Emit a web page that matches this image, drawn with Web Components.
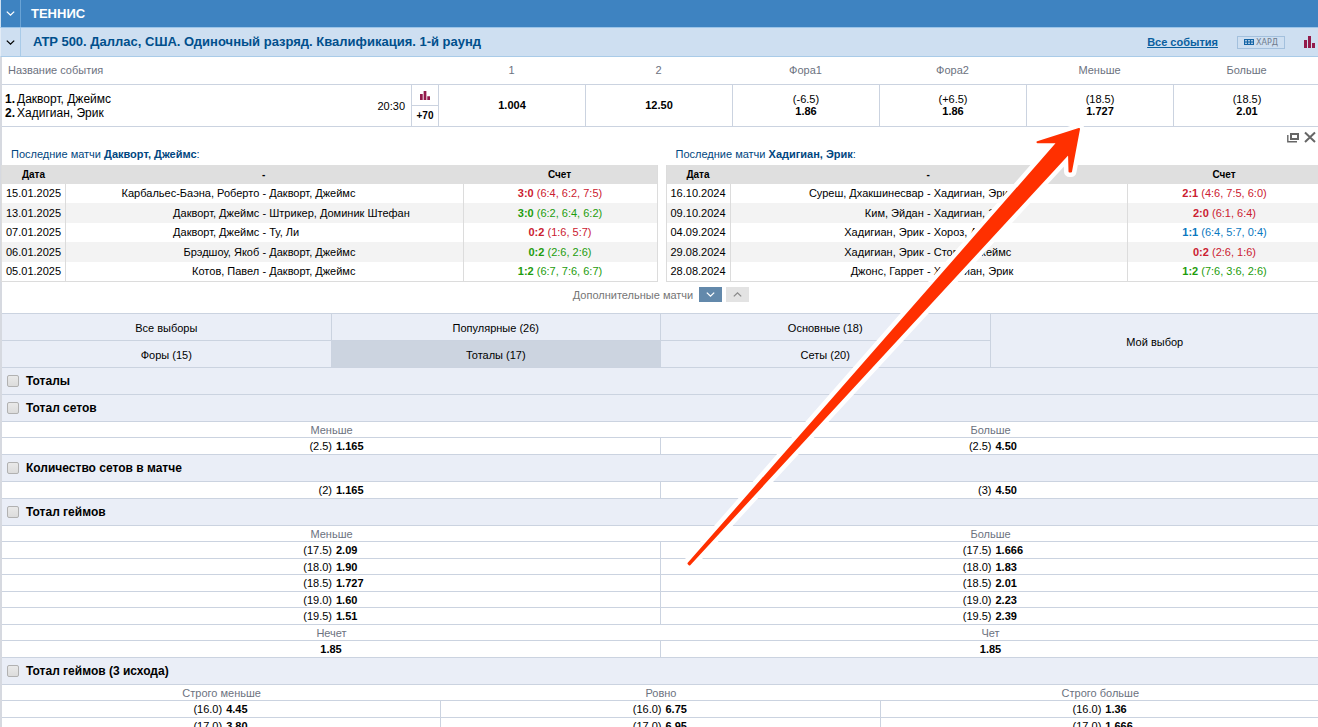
<!DOCTYPE html>
<html lang="ru">
<head>
<meta charset="utf-8">
<meta name="viewport" content="width=device-width, initial-scale=1">
<title>Теннис – линия</title>
<style>
  html { overflow: hidden auto; scrollbar-width: none; }
  body { margin: 0; background: #fff; color: #000; font: 11px/14px "Liberation Sans", Arial, sans-serif; }
</style>
</head>
<body>
<betting-page></betting-page>

<script>
const define = (name, html, setup) => {
  const template = document.createElement('template');
  template.innerHTML = `<style>*{box-sizing:border-box}:host{display:block}</style>${html}`;
  customElements.define(name, class extends HTMLElement {
    constructor() {
      super();
      this.attachShadow({ mode: 'open' }).append(template.content.cloneNode(true));
    }
    connectedCallback() {
      if (setup && !this.ready) { this.ready = true; setup(this, this.shadowRoot); }
    }
  });
};

/* Icons */
define('chevron-icon', `
<style>
  :host { width: 9px; height: 9px; line-height: 0; }
  :host([up]) svg { transform: rotate(180deg); }
</style>
<svg width="9" height="9" viewBox="0 0 9 9" fill="none" stroke="currentColor" stroke-width="1.3" aria-hidden="true"><path d="M.8 2.6 4.5 6.2 8.2 2.6"/></svg>`);

define('bars-icon', `
<style>:host { line-height: 0; color: #931b4b; } svg { width: var(--w, 11px); height: var(--h, 12px); }</style>
<svg viewBox="0 0 11 12" preserveAspectRatio="none" fill="currentColor" aria-hidden="true"><path d="M0 4h3v8H0zM4 0h3v12H4zM8 7h3v5H8z"/></svg>`);

/* Sport title */
define('sport-header', `
<style>
  header { display: grid; grid-template-columns: 20px 1fr; height: 28px; background: #3e83c1; color: #fff; border-bottom: 1px solid #9cc5e9; border-left: 1px solid #cfe0f1; }
  button { all: unset; display: grid; place-items: center; border-right: 1px solid #6aa3d5; }
  h1 { margin: 0; padding-left: 10px; font-size: 13px; line-height: 27px; font-weight: 700; }
</style>
<header><button aria-label="Свернуть"><chevron-icon></chevron-icon></button><h1><slot></slot></h1></header>`);

/* Tournament bar */
define('league-bar', `
<style>
  header { display: flex; height: 29px; background: #cedff1; color: #004f8c; border-bottom: 1px solid #a9cbe8; border-left: 1px solid #e3ecf6; }
  .fold { all: unset; display: grid; place-items: center; flex: 0 0 19px; color: #000; border-right: 1px solid #a9cbe8; }
  h2 { flex: 1; margin: 0; padding-left: 12px; font-size: 13px; line-height: 28px; }
  nav { display: flex; align-items: center; padding-right: 5px; }
  a { color: #0a5f9f; font-weight: 700; }
  .court { display: flex; align-items: center; gap: 2px; height: 13px; margin: 0 19px; padding: 0 6px; border: 1px solid #a3c0dd; color: #6f7b8c; font: 8px/11px "DejaVu Sans", sans-serif; }
  .court svg { flex: none; }
</style>
<header>
  <button class="fold" aria-label="Свернуть"><chevron-icon></chevron-icon></button>
  <h2><slot></slot></h2>
  <nav>
    <a href="#all">Все события</a>
    <span class="court"><svg width="10" height="6" viewBox="0 0 10 6" aria-hidden="true"><path fill="#1464a5" d="M0 0h10v6H0z"/><path fill="#cedff1" d="M1 1h2v1H1zM4 1h2v1H4zM7 1h2v1H7zM1 4h2v1H1zM4 4h2v1H4zM7 4h2v1H7z" opacity=".8"/><path fill="#cedff1" d="M1 2h2v2H1zM4 2h2v2H4zM7 2h2v2H7z" opacity=".35"/></svg>ХАРД</span>
    <bars-icon></bars-icon>
  </nav>
</header>`);

/* Event row with the main odds */
define('event-table', `
<style>
  table { width: 100%; table-layout: fixed; border-collapse: separate; border-spacing: 0; }
  th, td { padding: 0; border-bottom: 1px solid #cbd3e0; text-align: center; }
  th { height: 28px; padding-bottom: 2px; color: #6c7280; font-weight: 400; }
  td { height: 42px; line-height: 12px; border-left: 1px solid #cbd3e0; }
  th:first-child { text-align: left; padding-left: 6px; }
  td:first-child { border-left: 0; }
  .name { width: 409px; } .stat { width: 27px; }
  .event { display: flex; align-items: center; justify-content: space-between; padding: 0 6px 0 3px; text-align: left; }
  .players { font-size: 12px; line-height: 14px; }
  .players b { margin-right: 2px; }
  .more { display: grid; grid-template-rows: 21px 20px; font-size: 10px; font-weight: 700; line-height: 20px; }
  .more span { display: grid; place-items: center; border-bottom: 1px solid #cbd3e0; }
  bars-icon { --w: 10px; --h: 9px; }
  .odds { padding-bottom: 2px; }
  .odds span { display: block; }
</style>
<table>
  <colgroup><col class="name"><col class="stat"><col span="6"></colgroup>
  <thead><tr><th colspan="2">Название события</th><th>1</th><th>2</th><th>Фора1</th><th>Фора2</th><th>Меньше</th><th>Больше</th></tr></thead>
  <tbody><tr>
    <td><div class="event"><div class="players"><b>1.</b>Дакворт, Джеймс<br><b>2.</b>Хадигиан, Эрик</div><time>20:30</time></div></td>
    <td><div class="more"><span><bars-icon></bars-icon></span>+70</div></td>
    <td class="odds"><b>1.004</b></td><td class="odds"><b>12.50</b></td>
    <td class="odds"><span>(-6.5)</span><b>1.86</b></td>
    <td class="odds"><span>(+6.5)</span><b>1.86</b></td>
    <td class="odds"><span>(18.5)</span><b>1.727</b></td>
    <td class="odds"><span>(18.5)</span><b>2.01</b></td>
  </tr></tbody>
</table>`);

/* A player's latest matches */
define('player-history', `
<style>
  h3 { margin: 0; padding-left: 10px; height: 18px; line-height: 14px; font-size: 11px; font-weight: 400; color: #004680; }
  table { width: 100%; table-layout: fixed; border-collapse: separate; border-spacing: 0; border: solid #dcdcdc; border-width: 0 1px 1px; }
  th, td { padding: 0; line-height: 14px; text-align: center; }
  th { height: 19px; background: #dfdfdf; font-size: 10px; }
  td { height: 19px; padding-bottom: 1px; }
  td + td { border-left: 1px solid #dcdcdc; }
  tbody tr:nth-child(even) td { height: 20px; background: #f3f3f3; }
  .date { width: 63px; } .score { width: 194px; }
  .pair { display: grid; grid-template-columns: 1fr 10px 1fr; }
  .pair :first-child { text-align: right; } .pair :last-child { text-align: left; }
  .r { color: #cb2030; } .g { color: #1d9c0c; } .b { color: #0a78c0; }
</style>
<h3>Последние матчи <b></b>:</h3>
<table>
  <colgroup><col class="date"><col><col class="score"></colgroup>
  <thead><tr><th>Дата</th><th>-</th><th>Счет</th></tr></thead>
  <tbody></tbody>
</table>`, (el, root) => {
  root.querySelector('b').textContent = el.getAttribute('player');
  root.querySelector('tbody').innerHTML = histories[el.getAttribute('player')].map(([date, a, b, tone, sum, sets]) =>
    `<tr><td>${date}</td><td><div class="pair"><span>${a}</span><span>-</span><span>${b}</span></div></td><td class="${tone}"><b>${sum}</b> (${sets})</td></tr>`).join('');
});

const histories = {
  'Дакворт, Джеймс': [
    ['15.01.2025', 'Карбальес-Баэна, Роберто', 'Дакворт, Джеймс', 'r', '3:0', '6:4, 6:2, 7:5'],
    ['13.01.2025', 'Дакворт, Джеймс', 'Штрикер, Доминик Штефан', 'g', '3:0', '6:2, 6:4, 6:2'],
    ['07.01.2025', 'Дакворт, Джеймс', 'Ту, Ли', 'r', '0:2', '1:6, 5:7'],
    ['06.01.2025', 'Брэдшоу, Якоб', 'Дакворт, Джеймс', 'g', '0:2', '2:6, 2:6'],
    ['05.01.2025', 'Котов, Павел', 'Дакворт, Джеймс', 'g', '1:2', '6:7, 7:6, 6:7']],
  'Хадигиан, Эрик': [
    ['16.10.2024', 'Суреш, Дхакшинесвар', 'Хадигиан, Эрик', 'r', '2:1', '4:6, 7:5, 6:0'],
    ['09.10.2024', 'Ким, Эйдан', 'Хадигиан, Эрик', 'r', '2:0', '6:1, 6:4'],
    ['04.09.2024', 'Хадигиан, Эрик', 'Хороз, Арда', 'b', '1:1', '6:4, 5:7, 0:4'],
    ['29.08.2024', 'Хадигиан, Эрик', 'Стори, Джеймс', 'r', '0:2', '2:6, 1:6'],
    ['28.08.2024', 'Джонс, Гаррет', 'Хадигиан, Эрик', 'g', '1:2', '7:6, 3:6, 2:6']]
};

define('history-panel', `
<style>
  .tools { display: flex; justify-content: flex-end; align-items: center; gap: 4px; height: 20px; padding-right: 4px; }
  button { all: unset; display: grid; place-items: center; line-height: 0; }
  .players { display: grid; grid-template-columns: 1fr 1fr; gap: 8px; margin: 0 -2px 0 -1px; }
  footer { display: flex; justify-content: center; align-items: center; gap: 4px; height: 31px; padding-bottom: 6px; color: #757575; }
  footer span { margin-right: 2px; }
  footer button { width: 23px; height: 15px; background: #e3e3e3; color: #8a8a8a; }
  footer .on { background: #6389ab; color: #fff; }
</style>
<div class="tools">
  <button aria-label="Открыть в окне"><svg width="13" height="11" viewBox="0 0 13 11" fill="none" stroke="#666" aria-hidden="true"><path stroke-width="2" d="M4 2h7v5H4z"/><path stroke-width="1.4" d="M.8 3v6.700H10"/></svg></button>
  <button aria-label="Закрыть"><svg width="12" height="12" viewBox="0 0 12 12" fill="none" stroke="#666" stroke-width="2" aria-hidden="true"><path d="M1 1.5l10 9.5M11 1.500 1 11"/></svg></button>
</div>
<div class="players">
  <player-history player="Дакворт, Джеймс"></player-history>
  <player-history player="Хадигиан, Эрик"></player-history>
</div>
<footer><span>Дополнительные матчи</span><button class="on" aria-label="Показать больше"><chevron-icon></chevron-icon></button><button aria-label="Показать меньше"><chevron-icon up></chevron-icon></button></footer>`);

/* Market groups */
define('market-tabs', `
<style>
  nav { display: grid; grid-template-columns: repeat(4, 1fr); grid-auto-rows: 27px; border-top: 1px solid #cbd3e0; }
  button { font: inherit; color: inherit; margin: 0; padding: 2px 0 0; background: #eaeef7; border: solid #cbd3e0; border-width: 0 1px 1px 0; border-radius: 0; }
  .on { background: #ccd4e0; }
  .own { grid-area: 1 / 4 / span 2; }
</style>
<nav>
  <button>Все выборы</button><button>Популярные (26)</button><button>Основные (18)</button><button class="own">Мой выбор</button>
  <button>Форы (15)</button><button class="on">Тоталы (17)</button><button>Сеты (20)</button>
</nav>`);

/* One market: heading and its odds; a row of plain strings is a row of captions */
define('market-section', `
<style>
  label { display: flex; align-items: center; gap: 7px; height: 27px; padding-left: 5px; background: #eaeef7; border-bottom: 1px solid #cbd3e0; font-size: 12px; font-weight: 700; }
  input { appearance: none; width: 12px; height: 12px; margin: 0; border: 1px solid #b1b1b1; border-radius: 2px; background: linear-gradient(#e9e9e9, #dcdcdc); }
  table { width: 100%; table-layout: fixed; border-collapse: separate; border-spacing: 0; }
  th, td { padding: 0; height: 16px; line-height: 14px; text-align: center; border-bottom: 1px solid #cbd3e0; }
  tr:nth-child(even) > *, tr:only-child > * { height: 17px; }
  th { color: #6c7280; font-weight: 400; }
  td:not(:last-child) { border-right: 1px solid #cbd3e0; }
  .odd { display: grid; grid-template-columns: 1fr 1fr; gap: 4px; padding-left: 6px; text-align: left; }
  .odd span { text-align: right; }
</style>
<label><input type="checkbox"><span></span></label>
<table></table>`, (el, root) => {
  const market = markets[el.getAttribute('market')];
  root.querySelector('span').textContent = market.title;
  if (!market.rows) { root.querySelector('table').remove(); return; }
  const odd = ([param, value]) => param
    ? `<td><div class="odd"><span>(${param})</span><b>${value}</b></div></td>`
    : `<td><b>${value}</b></td>`;
  root.querySelector('table').innerHTML = market.rows.map(row =>
    '<tr>' + row.map(cell => typeof cell === 'string' ? `<th>${cell}</th>` : odd(cell)).join('') + '</tr>').join('');
});

const markets = {
  totals: { title: 'Тоталы' },
  sets: { title: 'Тотал сетов', rows: [['Меньше', 'Больше'], [['2.5', '1.165'], ['2.5', '4.50']]] },
  count: { title: 'Количество сетов в матче', rows: [[['2', '1.165'], ['3', '4.50']]] },
  games: { title: 'Тотал геймов', rows: [
    ['Меньше', 'Больше'],
    [['17.5', '2.09'], ['17.5', '1.666']],
    [['18.0', '1.90'], ['18.0', '1.83']],
    [['18.5', '1.727'], ['18.5', '2.01']],
    [['19.0', '1.60'], ['19.0', '2.23']],
    [['19.5', '1.51'], ['19.5', '2.39']],
    ['Нечет', 'Чет'],
    [['', '1.85'], ['', '1.85']]] },
  games3: { title: 'Тотал геймов (3 исхода)', rows: [
    ['Строго меньше', 'Ровно', 'Строго больше'],
    [['16.0', '4.45'], ['16.0', '6.75'], ['16.0', '1.36']],
    [['17.0', '3.80'], ['17.0', '6.95'], ['17.0', '1.666']]] }
};

/* Hand-drawn arrow laid over the page */
define('pointer-arrow', `
<style>:host { position: absolute; left: 680px; top: 120px; pointer-events: none; line-height: 0; }</style>
<svg width="410" height="455" viewBox="680 120 410 455" stroke-linejoin="round" aria-hidden="true">
  <path d="M1079 129 1037.500 142.300 1058 142 688.500 563.500 689.500 564.500 1069 153 1069.500 171.500 1071 171.500z" fill="#fff" stroke="#fff" stroke-width="11"/>
  <path d="M1079 129 1037.500 142.300 1058 142 688.500 563.500 689.500 564.500 1069 153 1069.500 171.500 1071 171.500z" fill="#ff3000" stroke="#ff3000" stroke-width="2"/>
</svg>`);

define('betting-page', `
<style>
  :host { position: relative; width: calc(100% + 2px); }
  main { border-left: 2px solid #d6d9e0; }
</style>
<sport-header>ТЕННИС</sport-header>
<league-bar>ATP 500. Даллас, США. Одиночный разряд. Квалификация. 1-й раунд</league-bar>
<main>
  <event-table></event-table>
  <history-panel></history-panel>
  <market-tabs></market-tabs>
  <market-section market="totals"></market-section>
  <market-section market="sets"></market-section>
  <market-section market="count"></market-section>
  <market-section market="games"></market-section>
  <market-section market="games3"></market-section>
</main>
<pointer-arrow></pointer-arrow>`);
</script>
</body>
</html>
